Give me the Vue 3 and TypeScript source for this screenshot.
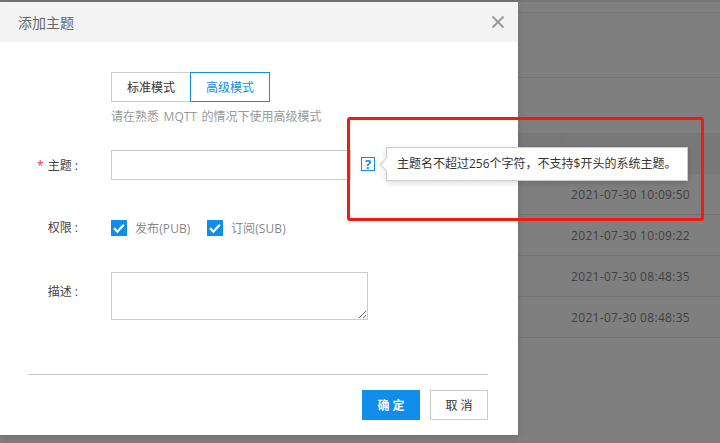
<script setup lang="ts">
const rows = [13, 65, 56]
const times = ['2021-07-30 10:09:50', '2021-07-30 10:09:22', '2021-07-30 08:48:35', '2021-07-30 08:48:35']
</script>

<template>
  <div class="page">
    <div class="topbar"></div>
    <div class="bg">
      <div v-for="(h, i) in rows" :key="i" class="bg-row" :style="{ height: h + 'px' }"></div>
      <div class="bg-head"><span class="bg-col"></span></div>
      <div v-for="(t, i) in times" :key="t + i" class="bg-time">{{ t }}</div>
    </div>

    <section class="dialog">
      <header class="dialog-head">
        <h2>添加主题</h2>
        <svg class="close" width="14" height="14" viewBox="0 0 14 14"><path d="M1.5 1.5l11 11M12.5 1.5l-11 11" stroke="#999" stroke-width="1.8" fill="none" /></svg>
      </header>
      <div class="dialog-body">
        <div class="field mode">
          <div class="ctrl">
            <div class="toggle">
              <button class="tab">标准模式</button>
              <button class="tab active">高级模式</button>
            </div>
            <p class="hint">请在熟悉 MQTT 的情况下使用高级模式</p>
          </div>
        </div>
        <div class="field topic">
          <label><i>*</i>主题 :</label>
          <input class="input" type="text" />
          <span class="help">?</span>
        </div>
        <div class="field perm">
          <label>权限 :</label>
          <span class="check"><svg width="16" height="16" viewBox="0 0 16 16"><rect width="16" height="16" fill="#108ee9" /><path d="M3 8.2l3.4 3.4 6.4-6.8" stroke="#fff" stroke-width="2.2" fill="none" /></svg>发布(PUB)</span>
          <span class="check"><svg width="16" height="16" viewBox="0 0 16 16"><rect width="16" height="16" fill="#108ee9" /><path d="M3 8.2l3.4 3.4 6.4-6.8" stroke="#fff" stroke-width="2.2" fill="none" /></svg>订阅(SUB)</span>
        </div>
        <div class="field desc">
          <label>描述 :</label>
          <textarea class="area"></textarea>
        </div>
      </div>
      <footer class="dialog-foot">
        <button class="btn primary">确 定</button>
        <button class="btn">取 消</button>
      </footer>
    </section>

    <div class="tip">主题名不超过256个字符，不支持$开头的系统主题。</div>
    <div class="redbox"></div>
  </div>
</template>

<style>
html, body { margin: 0; }
</style>

<style scoped>
.page {
  position: relative;
  width: 720px;
  height: 443px;
  overflow: hidden;
  background: #7f7f7f;
  font-family: "Open Sans", "Noto Sans CJK SC", sans-serif;
  font-size: 12px;
  color: #333;
}
.topbar { height: 2px; background: #757575; }
.bg { margin-left: 518px; margin-top: -2px; }
.bg-row { box-sizing: border-box; border-bottom: 1px solid #747474; }
.bg-head { height: 40px; box-sizing: border-box; background: #787878; border-bottom: 1px solid #747474; display: flex; }
.bg-col { width: 43px; border-right: 1px solid #747474; }
.bg-time {
  height: 41px;
  box-sizing: border-box;
  border-bottom: 1px solid #747474;
  padding-right: 30px;
  text-align: right;
  line-height: 41px;
  letter-spacing: .3px;
  color: #3f3f3f;
}
.dialog {
  position: absolute;
  left: 0;
  top: 2px;
  width: 518px;
  height: 433px;
  background: #fff;
  box-shadow: 0 2px 8px rgba(0, 0, 0, .15);
  display: flex;
  flex-direction: column;
}
.dialog-head {
  height: 40px;
  flex: none;
  background: #f3f3f3;
  padding: 0 13px 0 18px;
  display: flex;
  align-items: center;
  justify-content: space-between;
}
.dialog-head h2 { margin: 0; font-size: 14px; font-weight: 400; color: #666; }
.dialog-body { flex: 1; padding: 30px 0 0 0; }
.field { display: flex; align-items: flex-start; padding-left: 111px; position: relative; }
.field label {
  position: absolute;
  left: 0;
  top: 0;
  width: 78px;
  text-align: right;
  line-height: 30px;
  color: #444;
}
.field label i { color: #e4393c; font-style: normal; margin-right: 4px; }
.toggle { display: flex; height: 30px; }
.tab {
  width: 80px;
  height: 30px;
  box-sizing: border-box;
  border: 1px solid #ccc;
  background: #fff;
  padding: 0;
  font: inherit;
  color: #333;
}
.tab.active { margin-left: -1px; border-color: #108ee9; color: #108ee9; }
.hint { margin: 6px 0 0; color: #999; line-height: 17px; word-spacing: 1.5px; }
.topic { margin-top: 25px; height: 30px; }
.topic label { top: 1px; }
.input {
  width: 240px;
  height: 30px;
  box-sizing: border-box;
  border: 1px solid #ccc;
  outline: none;
  padding: 0;
  display: block;
}
.help {
  width: 12px;
  height: 12px;
  margin: 7px 0 0 10px;
  border: 1.5px solid #108ee9;
  color: #108ee9;
  font-size: 13px;
  font-weight: 700;
  line-height: 12px;
  text-align: center;
}
.perm { margin-top: 33px; height: 30px; align-items: center; color: #888; gap: 16px; }
.check { display: flex; align-items: center; gap: 8px; width: 80px; white-space: nowrap; letter-spacing: .1px; }
.desc { margin-top: 29px; }
.desc label { top: 5px; }
.area {
  width: 257px;
  height: 48px;
  box-sizing: border-box;
  border: 1px solid #ccc;
  outline: none;
  display: block;
  padding: 0;
  margin: 0;
}
.dialog-foot {
  flex: none;
  margin: 0 30px 0 28px;
  border-top: 1px solid #ccc;
  padding: 15px 0;
  display: flex;
  justify-content: flex-end;
  gap: 10px;
}
.btn {
  width: 58px;
  height: 30px;
  box-sizing: border-box;
  border: 1px solid #ccc;
  background: #fff;
  padding: 0;
  font: inherit;
  color: #333;
}
.btn.primary { background: #108ee9; border-color: #108ee9; color: #fff; font-weight: 700; }
.tip {
  position: absolute;
  left: 386px;
  top: 147px;
  width: 302px;
  height: 34px;
  box-sizing: border-box;
  background: #fff;
  border: 1px solid #ccc;
  box-shadow: 0 2px 6px rgba(0, 0, 0, .15);
  padding-left: 10px;
  line-height: 32px;
  white-space: nowrap;
  color: #333;
}
.tip::before {
  content: "";
  position: absolute;
  left: -6px;
  top: 11px;
  width: 10px;
  height: 10px;
  background: #fff;
  border-left: 1px solid #ccc;
  border-bottom: 1px solid #ccc;
  transform: rotate(45deg) scale(.9);
}
.redbox {
  position: absolute;
  left: 347px;
  top: 117px;
  width: 357px;
  height: 104px;
  box-sizing: border-box;
  border: 3px solid #f5190f;
  border-radius: 3px;
  pointer-events: none;
}
</style>
